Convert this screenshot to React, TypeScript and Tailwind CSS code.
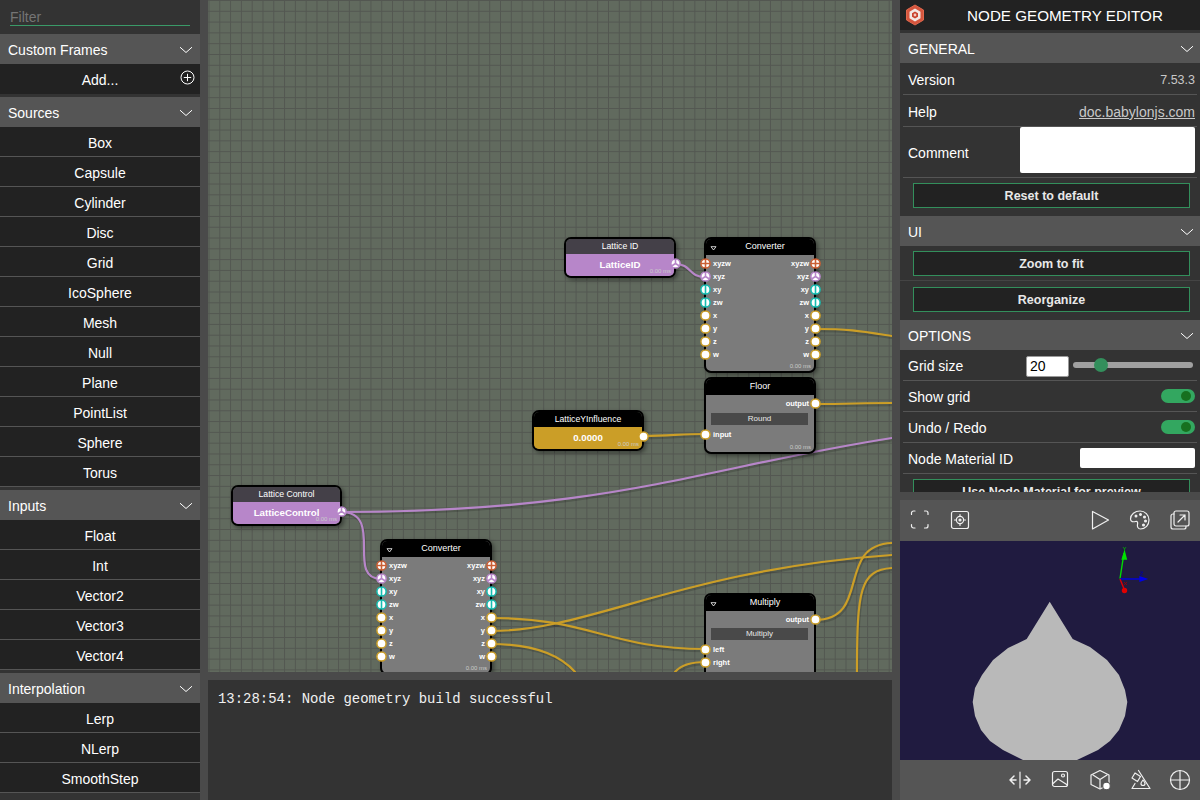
const FONT = "font-['Liberation_Sans',Arial,sans-serif]";

type PortKind = "vec4" | "vec3" | "vec2" | "float";

const Chevron = () => (
  <svg width="14" height="8" viewBox="0 0 14 8" fill="none" stroke="white" strokeWidth="1" className="shrink-0">
    <path d="M1 1.200l6 5.300 6-5.300" />
  </svg>
);

const SidebarHeader = ({ title }: { title: string }) => (
  <div className="h-[30px] bg-[#555555] flex items-center justify-between pl-2 pr-[7px] pt-[2px] text-[14px] text-white">
    <span>{title}</span>
    <Chevron />
  </div>
);

const SidebarGroup = ({ title, items }: { title: string; items: string[] }) => (
  <div className="mb-[3px]">
    <SidebarHeader title={title} />
    {items.map((item) => (
      <div
        key={item}
        className="h-[30px] bg-[#222222] border-b border-[#555555] pt-[3px] flex items-center justify-center text-[14px] text-white"
      >
        {item}
      </div>
    ))}
  </div>
);

const Port = ({ kind }: { kind: PortKind }) => {
  const ring = { vec4: "#cb5f34", vec3: "#b786c9", vec2: "#16bcb1", float: "#cb9e27" }[kind];
  return (
    <svg width="11" height="11" viewBox="0 0 11 11" className="shrink-0 block">
      <circle cx="5.5" cy="5.5" r="4.6" fill="white" stroke={ring} strokeWidth="1.5" />
      {kind === "vec4" && <path d="M5.5 1v9M1 5.5h9" stroke={ring} strokeWidth="1.6" />}
      {kind === "vec3" && <path d="M5.5 5.5V1M5.5 5.5L1.6 8M5.5 5.5L9.4 8" stroke={ring} strokeWidth="1.6" />}
      {kind === "vec2" && <path d="M5.5 1v9" stroke={ring} strokeWidth="1.6" />}
    </svg>
  );
};

const PortRow = ({ label, kind, side }: { label: string; kind: PortKind; side: "left" | "right" }) =>
  side === "left" ? (
    <div className="h-[13px] flex items-center gap-[2px] -ml-[6px]">
      <Port kind={kind} />
      <span>{label}</span>
    </div>
  ) : (
    <div className="h-[13px] flex items-center justify-end gap-[1px] -mr-[7px]">
      <span>{label}</span>
      <Port kind={kind} />
    </div>
  );

const Triangle = () => (
  <svg width="7" height="5" viewBox="0 0 7 5" className="absolute left-[4px] top-[7px]">
    <path d="M1 .7h5L3.500 4z" fill="none" stroke="white" strokeWidth=".8" />
  </svg>
);

const Time = () => (
  <span className="absolute right-[3px] bottom-[1px] text-[6px] leading-[8px] font-normal text-[#c9c9c9]">0.00 ms</span>
);

const converterPorts: [string, PortKind][] = [
  ["xyzw", "vec4"],
  ["xyz", "vec3"],
  ["xy", "vec2"],
  ["zw", "vec2"],
  ["x", "float"],
  ["y", "float"],
  ["z", "float"],
  ["w", "float"],
];

const Converter = ({ className }: { className: string }) => (
  <div
    className={`absolute w-[112px] h-[136px] rounded-[7px] border-2 border-black bg-[#7b7b7b] shadow-[2px_2px_4px_rgba(0,0,0,0.4)] text-[7.5px] font-bold text-white ${className}`}
  >
    <div className="relative h-[16px] pl-[10px] bg-black rounded-t-[5px] flex items-center justify-center text-[9px] font-normal">
      Converter
      <Triangle />
    </div>
    <div className="grid grid-cols-2 pt-[2px]">
      <div>
        {converterPorts.map(([l, k]) => (
          <PortRow key={l} label={l} kind={k} side="left" />
        ))}
      </div>
      <div>
        {converterPorts.map(([l, k]) => (
          <PortRow key={l} label={l} kind={k} side="right" />
        ))}
      </div>
    </div>
    <Time />
  </div>
);

const InputNode = ({
  className,
  title,
  value,
  kind,
  body,
  dark,
}: {
  className: string;
  title: string;
  value: string;
  kind: PortKind;
  body: string;
  dark?: boolean;
}) => (
  <div
    className={`absolute h-[41px] rounded-[7px] border-2 border-black shadow-[2px_2px_4px_rgba(0,0,0,0.4)] ${className}`}
  >
    <div
      className={`h-[15px] rounded-t-[5px] flex items-center justify-center text-[8.7px] text-white ${dark ? "bg-[#444048]" : "bg-black"}`}
    >
      {title}
    </div>
    <div className={`relative h-[22px] rounded-b-[5px] flex items-center justify-center text-[9.700px] font-bold text-white ${body}`}>
      {value}
      <div className="absolute -right-[7px] top-[4px]">
        <Port kind={kind} />
      </div>
      <Time />
    </div>
  </div>
);

const Select = ({ label, className }: { label: string; className: string }) => (
  <div className={`ml-[5px] mr-[6px] h-[12px] bg-[#494949] flex items-center justify-center text-[8px] font-normal text-[#e8e8e8] ${className}`}>
    {label}
  </div>
);

const purpleLinks = [
  "M675 264C692 264 688 277 705 277",
  "M341 512C610 512 700 468 892 438",
  "M341 512C385 512 345 579 381 579",
];

const goldLinks = [
  "M815 329C850 329 860 331 892 336",
  "M815 404C850 404 860 403 892 403",
  "M643 436C670 436 680 434 705 434",
  "M491 618C590 618 610 649 705 649",
  "M491 631C590 631 680 570 892 555",
  "M491 644C535 644 560 655 575 672",
  "M675 672C682 664 692 662 705 662",
  "M815 620C872 620 835 545 892 543",
  "M857 672C857 590 860 570 892 568",
];

const Links = () => (
  <svg className="absolute inset-0 w-full h-full" viewBox="208 0 684 672" fill="none" strokeLinecap="round">
    <g stroke="rgba(0,0,0,0.16)" strokeWidth="2.500" transform="translate(1 2)">
      {[...purpleLinks, ...goldLinks].map((d) => (
        <path key={d} d={d} />
      ))}
    </g>
    <g stroke="#b786c9" strokeWidth="2.200">
      {purpleLinks.map((d) => (
        <path key={d} d={d} />
      ))}
    </g>
    <g stroke="#cb9e27" strokeWidth="2.200">
      {goldLinks.map((d) => (
        <path key={d} d={d} />
      ))}
    </g>
  </svg>
);

const Canvas = () => (
  <div className="relative flex-1 overflow-hidden bg-[#616a5e] bg-[linear-gradient(to_right,#535751_1px,transparent_1px),linear-gradient(to_bottom,#535751_1px,transparent_1px)] bg-[size:10.8px_10.8px] bg-[position:0.5px_0px]">
    <Links />
    <InputNode
      className="left-[356px] top-[237px] w-[112px]"
      title="Lattice ID"
      value="LatticeID"
      kind="vec3"
      body="bg-[#b786c9]"
      dark
    />
    <Converter className="left-[496px] top-[237px]" />
    <div className="absolute left-[496px] top-[377px] w-[112px] h-[77px] rounded-[7px] border-2 border-black bg-[#7b7b7b] shadow-[2px_2px_4px_rgba(0,0,0,0.4)] text-[7.5px] font-bold text-white">
      <div className="h-[16px] bg-black rounded-t-[5px] flex items-center justify-center text-[9px] font-normal">
        Floor
      </div>
      <div className="pt-[2px] ml-[54px]">
        <PortRow label="output" kind="float" side="right" />
      </div>
      <Select label="Round" className="mt-[3px]" />
      <div className="mt-[3px] w-[50px]">
        <PortRow label="input" kind="float" side="left" />
      </div>
      <Time />
    </div>
    <InputNode
      className="left-[324px] top-[410px] w-[112px] h-[40px]"
      title="LatticeYInfluence"
      value="0.0000"
      kind="float"
      body="bg-[#cb9e27]"
    />
    <InputNode
      className="left-[23px] top-[485px] w-[111px]"
      title="Lattice Control"
      value="LatticeControl"
      kind="vec3"
      body="bg-[#b786c9]"
      dark
    />
    <Converter className="left-[172px] top-[539px]" />
    <div className="absolute left-[496px] top-[593px] w-[112px] h-[100px] rounded-[7px] border-2 border-black bg-[#7b7b7b] text-[7.5px] font-bold text-white">
      <div className="relative h-[16px] pl-[10px] bg-black rounded-t-[5px] flex items-center justify-center text-[9px] font-normal">
        Multiply
        <Triangle />
      </div>
      <div className="pt-[2px] ml-[54px]">
        <PortRow label="output" kind="float" side="right" />
      </div>
      <Select label="Multiply" className="mt-[2px]" />
      <div className="mt-[3px] w-[50px]">
        <PortRow label="left" kind="float" side="left" />
        <PortRow label="right" kind="float" side="left" />
      </div>
    </div>
  </div>
);

const PropRow = ({
  label,
  children,
  height,
}: {
  label: string;
  children?: React.ReactNode;
  height: string;
}) => (
  <div
    className={`${height} mx-[3px] pl-[5px] pr-[2px] border-b border-[#555555] flex items-center justify-between text-[14px] text-white`}
  >
    <span className="pt-[2px]">{label}</span>
    {children}
  </div>
);

const PropButton = ({ label, wrapClass }: { label: string; wrapClass: string }) => (
  <div className={`flex items-center pl-[13px] pr-[10px] ${wrapClass}`}>
    <div className="w-full h-[25px] pt-[2px] bg-[#222222] border border-[#338f5c] flex items-center justify-center text-[12.500px] font-bold text-[#e8e8e8]">
      {label}
    </div>
  </div>
);

const Toggle = () => (
  <div className="w-[34px] h-[14px] rounded-full bg-[#33a760] flex items-center justify-end pr-[4px]">
    <div className="w-[10px] h-[10px] rounded-full bg-[#17701f]" />
  </div>
);

const SectionHeader = ({ title }: { title: string }) => (
  <div className="h-[30px] bg-[#555555] flex items-center justify-between pl-2 pr-[6px] pt-[2px] text-[14px] text-white">
    <span>{title}</span>
    <Chevron />
  </div>
);

const Logo = () => (
  <svg width="20" height="22" viewBox="0 0 20 22" className="ml-[5px] shrink-0">
    <path d="M10 1l8.500 5v10L10 21l-8.500-5V6z" fill="#d5553d" stroke="#e0684d" />
    <path d="M10 4.500l5.500 3.200v6.600L10 17.500l-5.500-3.200V7.700z" fill="#f2e8e4" />
    <path d="M10 7.500l3 1.800v3.400l-3 1.800-3-1.800V9.300z" fill="#c9422d" />
    <circle cx="10" cy="11" r="1.400" fill="#f2c9bd" />
  </svg>
);

const IconBox = ({ children }: { children: React.ReactNode }) => (
  <svg
    width="22"
    height="22"
    viewBox="0 0 22 22"
    fill="none"
    stroke="#f0f0f0"
    strokeWidth="1.200"
    strokeLinecap="round"
    strokeLinejoin="round"
    className="shrink-0"
  >
    {children}
  </svg>
);

const PreviewTop = () => (
  <div className="h-[41px] bg-[#555555] flex items-center pl-[10px] pr-[9px] pb-[1px]">
    <IconBox>
      <path d="M1.500 5.500V4a2 2 0 0 1 2-2h1.500M14.500 2H16a2 2 0 0 1 2 2v1.500M18 15.500V17a2 2 0 0 1-2 2h-1.500M5 19H3.500a2 2 0 0 1-2-2v-1.500" />
    </IconBox>
    <div className="ml-[17px]">
      <IconBox>
        <rect x="2.500" y="2.500" width="17" height="17" rx="2" />
        <circle cx="11" cy="11" r="3.600" />
        <circle cx="11" cy="11" r="1" fill="#f0f0f0" />
        <path d="M11 5.500v2M11 14.500v2M5.500 11h2M14.500 11h2" />
      </IconBox>
    </div>
    <div className="ml-auto">
      <IconBox>
        <path d="M3.500 2.500v17.500L19.500 11z" />
      </IconBox>
    </div>
    <div className="ml-[18px]">
      <IconBox>
        <path d="M11 2C6 2 1.500 5.500 1.500 10c0 3 3 3 5 2.500 2-.5 2.500 1 2 3-.5 2 .5 4.500 3 4.500 5 0 8.500-4 8.500-9S16 2 11 2z" />
        <circle cx="7" cy="7" r=".9" fill="#f0f0f0" />
        <circle cx="11.500" cy="5.500" r=".9" fill="#f0f0f0" />
        <circle cx="15.500" cy="8" r=".9" fill="#f0f0f0" />
        <circle cx="16.500" cy="12" r=".9" fill="#f0f0f0" />
        <circle cx="14.500" cy="16" r=".9" fill="#f0f0f0" />
      </IconBox>
    </div>
    <div className="ml-[18px]">
      <IconBox>
        <rect x="5" y="2" width="15" height="15" rx="2" />
        <path d="M5 5H4a2 2 0 0 0-2 2v11a2 2 0 0 0 2 2h11a2 2 0 0 0 2-2v-1" />
        <path d="M9 13l7-7M11 6h5v5" />
      </IconBox>
    </div>
  </div>
);

const PreviewBottom = () => (
  <div className="h-[40px] bg-[#555555] flex items-center justify-end gap-[18px] pr-[9px]">
    <IconBox>
      <path d="M11 3v16" />
      <path d="M5 7l-4 4 4 4M1 11h6M17 7l4 4-4 4M15 11h6" strokeWidth="1.500" />
    </IconBox>
    <IconBox>
      <rect x="3.500" y="2.500" width="15" height="15" rx="2" />
      <path d="M3.500 15l5.500-5 9.500 6" />
      <circle cx="14" cy="6.500" r="1.500" />
    </IconBox>
    <IconBox>
      <path d="M11 1.500l9 4.500v9.500l-9 4.500-9-4.500V6z" />
      <path d="M4 6l7 4.500L18 6M11 10.500V19" />
      <circle cx="17.500" cy="17" r="3.800" fill="white" stroke="#555555" />
    </IconBox>
    <IconBox>
      <path d="M9.500 1.500L21 19.500H3l3-5" />
      <path d="M6 4l5.500 3.500-3 5L3 9z" />
      <path d="M14 11c1.500 2 2 2.500 2 3.500a2 2 0 0 1-4 0c0-1 .5-1.500 2-3.500z" />
    </IconBox>
    <IconBox>
      <circle cx="11" cy="11" r="9.500" />
      <path d="M11 1.500v19M1.500 11h19" />
    </IconBox>
  </div>
);

const Preview3D = () => (
  <div className="relative h-[219px] bg-[#201b40] overflow-hidden">
    <svg className="absolute inset-0 w-full h-full" viewBox="900 541 300 219">
      <path
        fill="#b9b9b9"
        d="M1049.700 601.700L1072.700 639L1090 647L1107 660L1119 675L1125 690L1127.300 702L1125 716L1119 730L1110 741L1098 750L1077 760H1023L1003 750L990 741L981 730L975 716L972.700 702L975 688L982 675L993 660L1008 648L1026.700 639Z"
      />
      <g strokeWidth="1.400">
        <path d="M1120 578.500L1124 553" stroke="#00e000" />
        <path d="M1124.500 552l-2.200 7h4z" fill="#00e000" stroke="#00e000" />
        <path d="M1120 579H1144" stroke="#0000e6" />
        <path d="M1146 579l-6-2v4z" fill="#0000e6" stroke="#0000e6" />
        <path d="M1120 579L1124.500 590" stroke="#e00000" />
        <circle cx="1124.500" cy="590.500" r="2" fill="#e00000" stroke="#e00000" />
        <path d="M1123 547l1.500 2 1.500-2M1124.500 549v2" stroke="#00b000" strokeWidth=".8" fill="none" />
        <path d="M1140 572h3l-3 3h3" stroke="#0000a0" strokeWidth=".8" fill="none" />
        <path d="M1124 582l3 3M1127 582l-3 3" stroke="#a00000" strokeWidth=".8" fill="none" />
      </g>
    </svg>
  </div>
);

export default function App() {
  return (
    <div className={`w-[1200px] h-[800px] overflow-hidden flex bg-[#4a4a4a] ${FONT}`}>
      {/* left palette */}
      <div className="w-[200px] h-full bg-[#333333] overflow-hidden shrink-0">
        <div className="h-[34px] pl-[10px] pr-[10px] pt-[9px]">
          <div className="h-[17px] border-b border-[#3a9a68] text-[14px] leading-[16px] text-[#757575]">Filter</div>
        </div>
        <div className="mb-[3px]">
          <SidebarHeader title="Custom Frames" />
          <div className="relative h-[30px] bg-[#222222] pt-[2px] flex items-center justify-center text-[14px] text-white">
            Add...
            <svg width="15" height="15" viewBox="0 0 15 15" className="absolute right-[5px] top-[6px]" fill="none" stroke="white" strokeWidth="1">
              <circle cx="7.500" cy="7.500" r="6.500" />
              <path d="M7.500 3.800v7.400M3.800 7.500h7.400" />
            </svg>
          </div>
        </div>
        <SidebarGroup
          title="Sources"
          items={["Box", "Capsule", "Cylinder", "Disc", "Grid", "IcoSphere", "Mesh", "Null", "Plane", "PointList", "Sphere", "Torus"]}
        />
        <SidebarGroup title="Inputs" items={["Float", "Int", "Vector2", "Vector3", "Vector4"]} />
        <SidebarGroup title="Interpolation" items={["Lerp", "NLerp", "SmoothStep"]} />
      </div>

      {/* centre */}
      <div className="w-[684px] h-full ml-[8px] mr-[8px] flex flex-col shrink-0">
        <Canvas />
        <div className="h-[120px] mt-[8px] bg-[#333333] pl-[10px] pt-[11px] text-[13.950px] leading-[16px] text-[#f0f0f0] font-['Liberation_Mono',monospace]">
          13:28:54: Node geometry build successful
        </div>
      </div>

      {/* right panel */}
      <div className="w-[300px] h-full shrink-0 flex flex-col bg-[#333333]">
        <div className="h-[492px] overflow-hidden">
          <div className="h-[30px] bg-[#222222] flex items-center">
            <Logo />
            <div className="flex-1 pl-[5px] pt-[2px] text-center text-[15.200px] text-white">NODE GEOMETRY EDITOR</div>
          </div>
          <div className="mt-[3px]">
            <SectionHeader title="GENERAL" />
          </div>
          <PropRow label="Version" height="h-[32px] pt-[2px]">
            <span className="pt-[2px] text-[12.500px] text-[#c8c8c8]">7.53.3</span>
          </PropRow>
          <PropRow label="Help" height="h-[32px] pt-[2px]">
            <span className="pt-[2px] text-[14px] text-[#c8c8c8] underline">doc.babylonjs.com</span>
          </PropRow>
          <PropRow label="Comment" height="h-[51px]">
            <div className="self-start w-[175px] h-[46px] bg-white rounded-[2px]" />
          </PropRow>
          <PropButton label="Reset to default" wrapClass="h-[35px]" />
          <div className="mt-[3px]">
            <SectionHeader title="UI" />
          </div>
          <PropButton label="Zoom to fit" wrapClass="h-[35px] border-b border-[#444444]" />
          <PropButton label="Reorganize" wrapClass="h-[36px]" />
          <div className="mt-[3px]">
            <SectionHeader title="OPTIONS" />
          </div>
          <PropRow label="Grid size" height="h-[31px]">
            <div className="flex items-center mr-[2px]">
              <div className="mt-[3px] w-[43px] h-[21px] bg-white border border-[#999999] rounded-[2px] pl-[3px] text-[14px] leading-[19px] text-black">
                20
              </div>
              <div className="relative ml-[4px] w-[120px] h-[6px] rounded-full bg-[#a0a0a0]">
                <div className="absolute left-[21px] -top-[4px] w-[14px] h-[14px] rounded-full bg-[#338f5c]" />
              </div>
            </div>
          </PropRow>
          <PropRow label="Show grid" height="h-[31px]">
            <Toggle />
          </PropRow>
          <PropRow label="Undo / Redo" height="h-[31px]">
            <Toggle />
          </PropRow>
          <PropRow label="Node Material ID" height="h-[31px]">
            <div className="w-[115px] h-[20px] bg-white rounded-[2px]" />
          </PropRow>
          <PropButton label="Use Node Material for preview" wrapClass="h-[35px]" />
        </div>
        <div className="h-[8px] bg-[#4a4a4a]" />
        <PreviewTop />
        <Preview3D />
        <PreviewBottom />
      </div>
    </div>
  );
}
